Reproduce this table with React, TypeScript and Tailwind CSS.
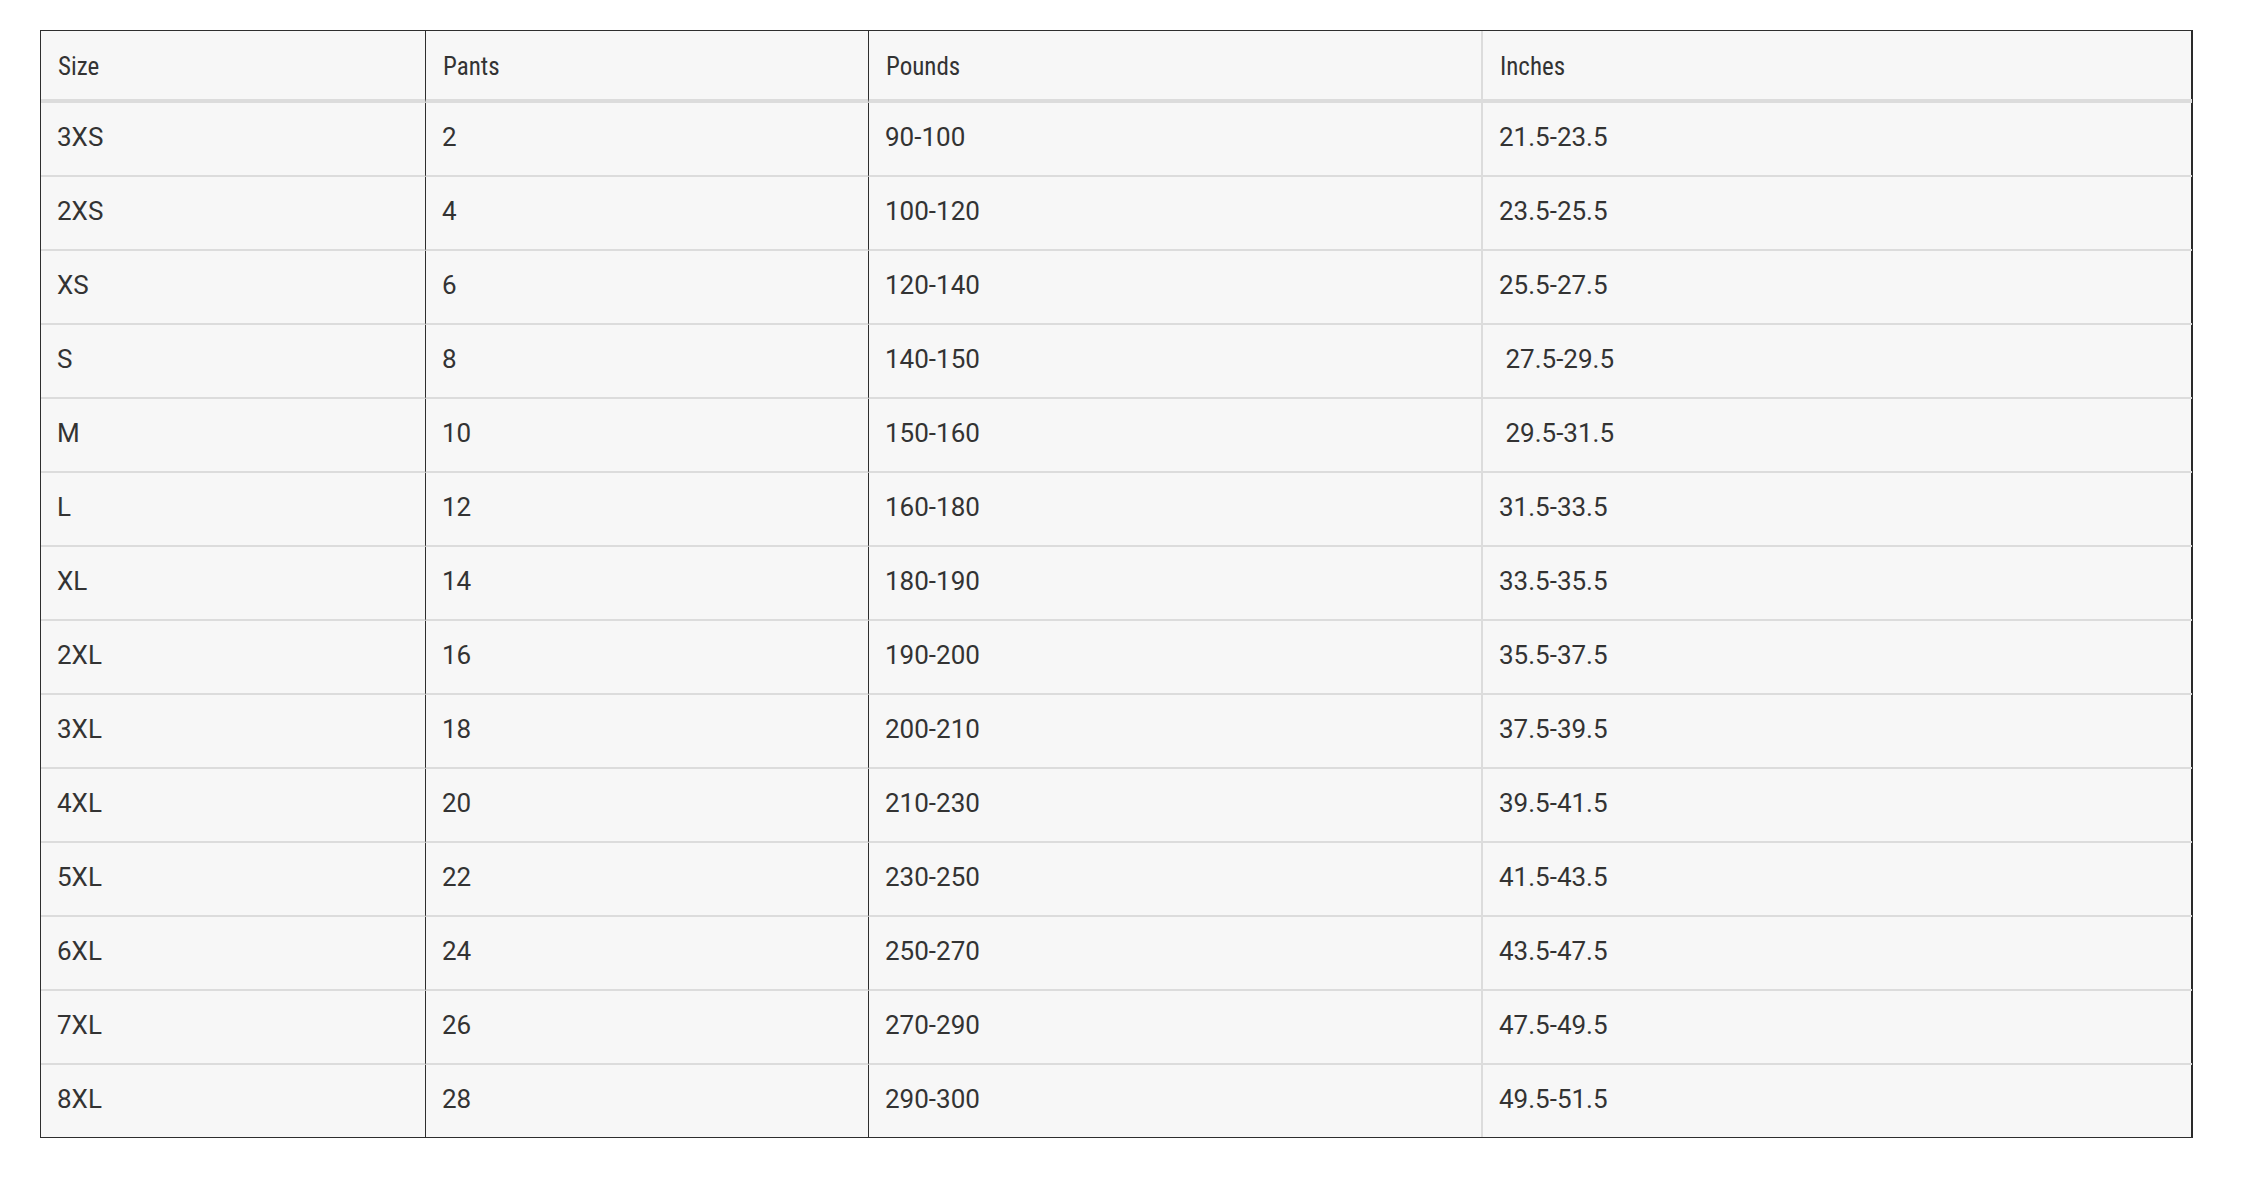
import React from "react";

const rows: [string, string, string, string][] = [
  ["3XS", "2", "90-100", "21.5-23.5"],
  ["2XS", "4", "100-120", "23.5-25.5"],
  ["XS", "6", "120-140", "25.5-27.5"],
  ["S", "8", "140-150", "\u00a027.5-29.5"],
  ["M", "10", "150-160", "\u00a029.5-31.5"],
  ["L", "12", "160-180", "31.5-33.5"],
  ["XL", "14", "180-190", "33.5-35.5"],
  ["2XL", "16", "190-200", "35.5-37.5"],
  ["3XL", "18", "200-210", "37.5-39.5"],
  ["4XL", "20", "210-230", "39.5-41.5"],
  ["5XL", "22", "230-250", "41.5-43.5"],
  ["6XL", "24", "250-270", "43.5-47.5"],
  ["7XL", "26", "270-290", "47.5-49.5"],
  ["8XL", "28", "290-300", "49.5-51.5"],
];

const headers = ["Size", "Pants", "Pounds", "Inches"];

function colBorder(i: number) {
  if (i === 0 || i === 1) return "border-r border-r-[#2e2e2e]";
  if (i === 2) return "border-r-2 border-r-[#dcdcdc]";
  return "";
}

export default function App() {
  return (
    <div className="min-h-screen bg-white pt-[30px] pl-[40px]" style={{ fontFamily: "Roboto, 'Noto Sans', sans-serif" }}>
      <div className="w-[2153px] border-l border-t border-b border-[#2e2e2e] border-r-2 border-r-[#2a2a2a] bg-[#f7f7f7] text-[#333333]">
        <div className="grid grid-cols-[385px_443px_614px_709px]">
          {headers.map((h, i) => (
            <div
              key={h}
              className={`h-[72px] border-b-4 border-b-[#dcdcdc] pl-[17px] pt-[21px] text-[25px] leading-[30px] [font-stretch:85%] ${colBorder(i)}`}
            >
              {h}
            </div>
          ))}
          {rows.map((r, ri) =>
            r.map((c, ci) => (
              <div
                key={`${ri}-${ci}`}
                className={`${ri === rows.length - 1 ? "h-[72px]" : "h-[74px] border-b-2 border-b-[#dcdcdc]"} pl-[16px] pt-[19px] text-[26px] leading-[30px] whitespace-pre ${colBorder(ci)}`}
              >
                {c}
              </div>
            ))
          )}
        </div>
      </div>
    </div>
  );
}
